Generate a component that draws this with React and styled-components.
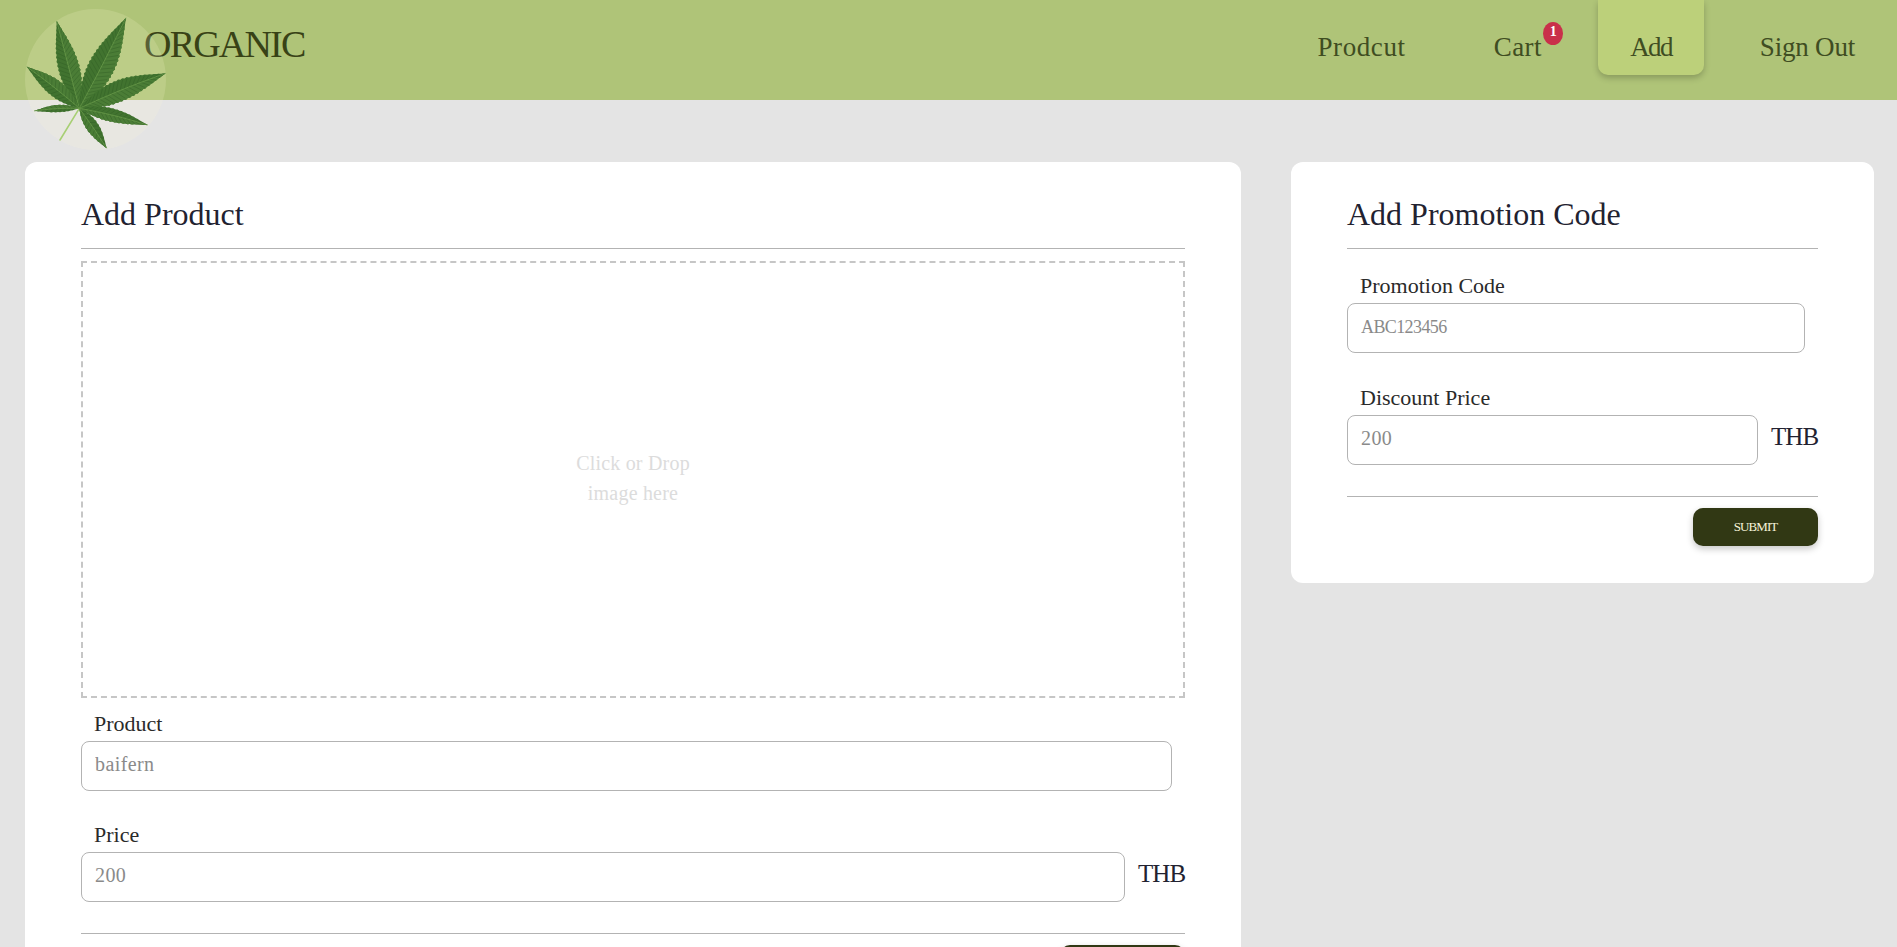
import React from "react";
import styled, { createGlobalStyle } from "styled-components";

const Global = createGlobalStyle`
  html, body { margin: 0; padding: 0; background: #e4e4e4; }
  body { font-family: "Liberation Serif", "Times New Roman", serif; color: #222230; overflow-x: hidden; }
  * { box-sizing: border-box; }
`;

const Header = styled.header`
  position: relative;
  height: 100px;
  background: #afc478;
  display: flex;
  align-items: flex-start;
  justify-content: space-between;
  padding: 0 10px 0 144px;
`;

const LogoBadge = styled.div`
  position: absolute;
  left: 25px;
  top: 9px;
  width: 141px;
  height: 141px;
  border-radius: 50%;
  background: rgba(255, 248, 216, 0.17);
`;

const LogoArt = styled.svg`
  display: block;
  filter: blur(0.3px);
`;

const Brand = styled.div`
  font-size: 38px;
  line-height: 44px;
  margin-top: 22px;
  letter-spacing: -1.8px;
  color: #384216;
`;

const Nav = styled.nav`
  display: flex;
  gap: 24px;
`;

const NavItem = styled.a`
  position: relative;
  display: block;
  height: 75px;
  padding: 31px 32px 0;
  font-size: 27px;
  line-height: 32px;
  letter-spacing: ${(p) => p.$track || 0}px;
  color: #3f4d22;
  border-radius: 0 0 10px 10px;
  background: ${(p) => (p.$active ? "#bcd07a" : "transparent")};
  box-shadow: ${(p) => (p.$active ? "0 3px 6px rgba(0,0,0,0.22)" : "none")};
`;

const Badge = styled.span`
  position: absolute;
  right: 11px;
  top: 22px;
  width: 20px;
  height: 23px;
  border-radius: 50%;
  background: #c9304a;
  color: #fff;
  font-size: 14px;
  font-weight: 700;
  letter-spacing: 0;
  line-height: 20px;
  text-align: center;
`;

const Main = styled.main`
  display: grid;
  grid-template-columns: 1216px 583px;
  gap: 50px;
  padding: 62px 23px 40px 25px;
  align-items: start;
`;

const Card = styled.section`
  background: #fff;
  border-radius: 12px;
  padding: 0 56px 37px;
`;

const Title = styled.h2`
  margin: 0;
  height: 86px;
  padding-top: 32px;
  font-size: 32px;
  line-height: 40px;
  font-weight: 400;
  color: #222230;
`;

const Rule = styled.hr`
  margin: 0;
  border: 0;
  height: 1px;
  background: #b3b3b3;
`;

const Drop = styled.div`
  margin-top: 12px;
  height: 437px;
  padding-bottom: 4px;
  border: 2px dashed #c6c6c6;
  display: flex;
  align-items: center;
  justify-content: center;
  text-align: center;
  font-size: 20px;
  line-height: 30px;
  letter-spacing: 0.2px;
  color: #dcdcdc;
`;

const Fields = styled.div`
  display: flex;
  flex-direction: column;
  gap: ${(p) => p.$gap}px;
  padding: ${(p) => p.$top}px 0 31px;
`;

const Field = styled.div``;

const Label = styled.label`
  display: block;
  padding: 1px 0 0 13px;
  margin-bottom: 5px;
  height: 26px;
  font-size: 22px;
  line-height: 26px;
  color: #2a2a2a;
`;

const Row = styled.div`
  display: flex;
  align-items: flex-start;
  gap: 13px;
`;

const Input = styled.input`
  display: block;
  flex: 1;
  width: ${(p) => (p.$unit ? "auto" : "calc(100% - 13px)")};
  min-width: 0;
  height: 50px;
  padding: 0 13px ${(p) => (p.$tight ? 1 : 3)}px;
  border: 1px solid #b3b3b3;
  border-radius: 8px;
  outline: none;
  background: #fff;
  font-family: inherit;
  font-size: ${(p) => (p.$tight ? 18 : 20)}px;
  letter-spacing: ${(p) => (p.$tight ? "-0.6px" : "0.4px")};
  &::placeholder { color: #8a8a8a; opacity: 1; }
`;

const Unit = styled.span`
  width: 47px;
  font-size: 25px;
  line-height: 50px;
  letter-spacing: -0.9px;
  margin-top: -3px;
  color: #222230;
`;

const Actions = styled.div`
  display: flex;
  justify-content: flex-end;
  padding-top: 11px;
`;

const Submit = styled.button`
  width: 125px;
  height: 38px;
  border: 0;
  border-radius: 10px;
  background: #313814;
  color: #f6f4da;
  font-family: inherit;
  font-size: 13px;
  letter-spacing: -0.9px;
  box-shadow: 0 3px 7px rgba(0, 0, 0, 0.22);
`;

const LEAVES = [
  { tip: [31.7, 12], w: 11, bend: 0 },
  { tip: [101, 8.7], w: 13.5, bend: 0.6 },
  { tip: [1.7, 57.7], w: 8.5, bend: 0.8 },
  { tip: [140.7, 64.3], w: 11, bend: -1.2 },
  { tip: [9, 102], w: 3.8, bend: 1 },
  { tip: [122.7, 116], w: 7, bend: -1.2 },
  { tip: [81.7, 139.3], w: 6.5, bend: -0.5 },
];
const BASE = [54.3, 99.3];

function leafletPaths({ tip, w, bend }) {
  const dx = tip[0] - BASE[0];
  const dy = tip[1] - BASE[1];
  const len = Math.hypot(dx, dy);
  const nx = -dy / len;
  const ny = dx / len;
  const steps = Math.round(len / 2.2);
  const at = (t, off) => {
    const c = bend * Math.sin(Math.PI * t) + off;
    return [BASE[0] + dx * t + nx * c, BASE[1] + dy * t + ny * c];
  };
  const profile = (t) => w * Math.pow(Math.sin(Math.PI * Math.pow(t, 0.88)), 1.05);
  const side = (sign) => {
    const pts = [];
    for (let i = 1; i < steps; i++) {
      const t = i / steps;
      const jag = i % 2 ? 1 : 0.91;
      pts.push(at(t, sign * profile(t) * jag));
    }
    return pts;
  };
  const fmt = (p) => `${p[0].toFixed(1)} ${p[1].toFixed(1)}`;
  const mid = [];
  for (let i = 0; i <= steps; i++) mid.push(at(i / steps, 0));
  const a = side(1);
  const b = side(-1).reverse();
  const outline = `M${fmt(BASE)}L${a.map(fmt).join("L")}L${fmt(tip)}L${b.map(fmt).join("L")}Z`;
  const half = `M${fmt(BASE)}L${a.map(fmt).join("L")}L${fmt(tip)}L${[...mid].reverse().map(fmt).join("L")}Z`;
  const rib = `M${mid.map(fmt).join("L")}`;
  let veins = "";
  for (let i = 2; i < steps - 1; i += 2) {
    const t = i / steps;
    const out = Math.min(t + 0.07, 0.99);
    [1, -1].forEach((s) => {
      veins += `M${fmt(at(t, 0))}L${fmt(at(out, s * profile(out) * 0.85))}`;
    });
  }
  return { outline, half, rib, veins };
}

function LeafLogo() {
  return (
    <LogoArt width="141" height="141" viewBox="0 0 141 141" aria-hidden="true">
      <path d="M54.3 99.3L35 131" stroke="#a7cf73" strokeWidth="1.6" strokeLinecap="round" fill="none" />
      {LEAVES.map((leaf, i) => {
        const { outline, half, rib, veins } = leafletPaths(leaf);
        return (
          <g key={i}>
            <path d={outline} fill="#41732f" />
            <path d={half} fill="#4b7d36" />
            <path d={veins} stroke="#2e5a22" strokeWidth="0.7" opacity="0.55" fill="none" />
            <path d={rib} stroke="#6f9f4e" strokeWidth="0.7" fill="none" />
          </g>
        );
      })}
    </LogoArt>
  );
}

function ProductCard() {
  return (
    <Card>
      <Title>Add Product</Title>
      <Rule />
      <Drop>
        <div>
          Click or Drop
          <br />
          image here
        </div>
      </Drop>
      <Fields $top={12} $gap={30}>
        <Field>
          <Label>Product</Label>
          <Input placeholder="baifern" />
        </Field>
        <Field>
          <Label>Price</Label>
          <Row>
            <Input $unit placeholder="200" />
            <Unit>THB</Unit>
          </Row>
        </Field>
      </Fields>
      <Rule />
      <Actions>
        <Submit>SUBMIT</Submit>
      </Actions>
    </Card>
  );
}

function PromoCard() {
  return (
    <Card>
      <Title>Add Promotion Code</Title>
      <Rule />
      <Fields $top={23} $gap={31}>
        <Field>
          <Label>Promotion Code</Label>
          <Input $tight placeholder="ABC123456" />
        </Field>
        <Field>
          <Label>Discount Price</Label>
          <Row>
            <Input $unit placeholder="200" />
            <Unit>THB</Unit>
          </Row>
        </Field>
      </Fields>
      <Rule />
      <Actions>
        <Submit>SUBMIT</Submit>
      </Actions>
    </Card>
  );
}

export default function App() {
  return (
    <>
      <Global />
      <Header>
        <LogoBadge>
          <LeafLogo />
        </LogoBadge>
        <Brand>ORGANIC</Brand>
        <Nav>
          <NavItem $track={0.6}>Prodcut</NavItem>
          <NavItem $track={0.5}>
            Cart
            <Badge>1</Badge>
          </NavItem>
          <NavItem $active $track={-1.6}>Add</NavItem>
          <NavItem $track={-0.2}>Sign Out</NavItem>
        </Nav>
      </Header>
      <Main>
        <ProductCard />
        <PromoCard />
      </Main>
    </>
  );
}
